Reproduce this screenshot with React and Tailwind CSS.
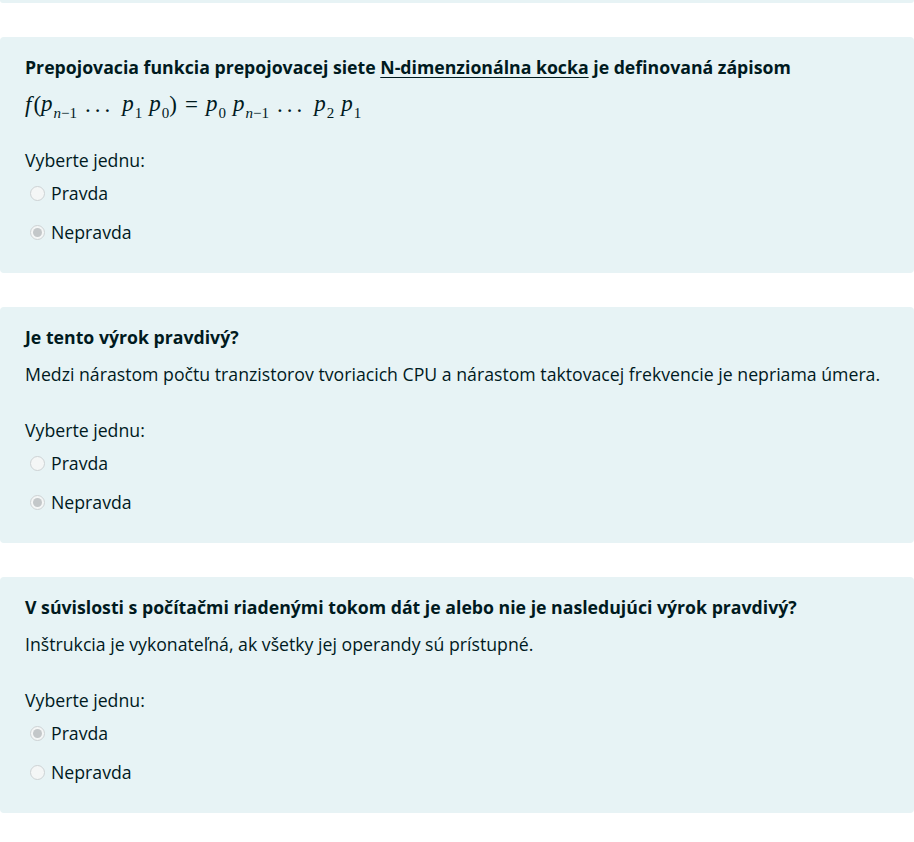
const questions = [
  {
    title: (
      <>
        Prepojovacia funkcia prepojovacej siete{" "}
        <a href="#" className="underline decoration-1 underline-offset-[3px]">
          N-dimenzionálna kocka
        </a>{" "}
        je definovaná zápisom
      </>
    ),
    formula: true,
    answer: 1,
  },
  {
    title: "Je tento výrok pravdivý?",
    text: "Medzi nárastom počtu tranzistorov tvoriacich CPU a nárastom taktovacej frekvencie je nepriama úmera.",
    answer: 1,
  },
  {
    title: "V súvislosti s počítačmi riadenými tokom dát je alebo nie je nasledujúci výrok pravdivý?",
    text: "Inštrukcia je vykonateľná, ak všetky jej operandy sú prístupné.",
    answer: 0,
  },
];

function Sub({ children }) {
  return <sub className="text-[15px] not-italic align-[-4px] leading-none ml-[1px]">{children}</sub>;
}

function P({ sub }) {
  return (
    <span className="italic">
      p<Sub>{sub}</Sub>
    </span>
  );
}

const nMinusOne = (
  <span className="italic">
    n<span className="not-italic">−1</span>
  </span>
);

function Dots() {
  return <span className="mx-[8px] tracking-[4px]">...</span>;
}

function Formula() {
  return (
    <div
      className="h-[27px] flex items-center text-[23px] leading-none whitespace-nowrap"
      style={{ fontFamily: '"Liberation Serif", "DejaVu Serif", serif' }}
    >
      <span className="italic mr-[2px]">f</span>
      <span>(</span>
      <P sub={nMinusOne} />
      <Dots />
      <P sub="1" />
      <span className="w-[7px]" />
      <P sub="0" />
      <span>)</span>
      <span className="mx-[8px]">=</span>
      <P sub="0" />
      <span className="w-[7px]" />
      <P sub={nMinusOne} />
      <Dots />
      <P sub="2" />
      <span className="w-[7px]" />
      <P sub="1" />
    </div>
  );
}

function Radio({ checked }) {
  return (
    <span className="w-[15px] h-[15px] rounded-full border border-[#cdd2d4] bg-[#f4f6f6] flex items-center justify-center shrink-0">
      {checked && <span className="w-[9px] h-[9px] rounded-full bg-[#c3c7c9]" />}
    </span>
  );
}

function Question({ q }) {
  return (
    <div className="bg-[#e7f3f5] rounded-[4px] pt-[17px] pb-[27px] px-[25px] text-[#001a1e]">
      <div className="font-bold leading-[27px]">{q.title}</div>
      <div className="mt-[10px] leading-[27px]">
        {q.formula ? <Formula /> : q.text}
      </div>
      <div className="mt-[29px] leading-[27px]">Vyberte jednu:</div>
      {["Pravda", "Nepravda"].map((label, i) => (
        <div key={label} className={`flex items-center gap-[6px] pl-[5px] leading-[27px] ${i === 0 ? "mt-[6px]" : "mt-[12px]"}`}>
          <Radio checked={q.answer === i} />
          <span>{label}</span>
        </div>
      ))}
    </div>
  );
}

export default function App() {
  return (
    <div
      className="bg-white min-h-[842px] flex flex-col gap-[34px] text-[17.7px]"
      style={{ fontFamily: '"Open Sans", "Noto Sans", sans-serif' }}
    >
      <div className="h-[3px] bg-[#e7f3f5] rounded-b-[4px]" />
      {questions.map((q, i) => (
        <Question key={i} q={q} />
      ))}
    </div>
  );
}
